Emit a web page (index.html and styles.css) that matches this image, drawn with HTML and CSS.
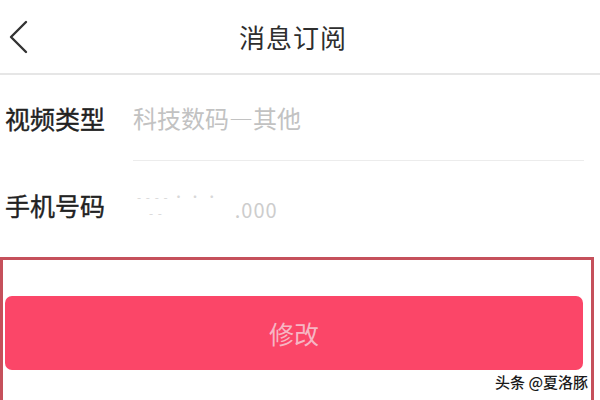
FILE: index.html
```html
<!DOCTYPE html>
<html lang="zh-CN">
<head>
<meta charset="utf-8">
<title>消息订阅</title>
<link rel="stylesheet" href="styles.css">
</head>
<body>
<div class="page">
  <header class="header">
    <svg class="back" width="24" height="36" viewBox="0 0 24 36">
      <path d="M19 4 L4 19 L19 34" fill="none" stroke="#333" stroke-width="2.4" stroke-linecap="round" stroke-linejoin="round"/>
    </svg>
    <h1 class="title">消息订阅</h1>
  </header>
  <section class="form">
    <div class="row row-type">
      <div class="label">视频类型</div>
      <div class="value value-line">科技数码—其他</div>
    </div>
    <div class="row row-phone">
      <div class="label">手机号码</div>
      <div class="value phone">
        <span class="blur">
          <span class="blur-top">- - - - · · ·</span>
          <span class="blur-bottom">- -</span>
        </span>
        <span class="tail">.000</span>
      </div>
    </div>
  </section>
  <section class="highlight">
    <button class="btn">修改</button>
  </section>
  <div class="watermark">头条 @夏洛豚</div>
</div>
</body>
</html>
```
FILE: styles.css
```css
html, body {
  margin: 0;
  padding: 0;
  background: #fff;
  overflow: hidden;
}
.page {
  position: relative;
  width: 600px;
  height: 400px;
  overflow: hidden;
  font-family: "Noto Sans CJK SC", "Noto Sans", sans-serif;
  color: #333;
}
.header {
  position: relative;
  height: 73px;
  border-bottom: 2px solid #e6e6e6;
  display: flex;
  align-items: center;
  justify-content: center;
}
.back {
  position: absolute;
  left: 7px;
  top: 18px;
}
.title {
  margin: 0 14px 0 0;
  font-size: 26px;
  font-weight: 400;
  color: #2e2e2e;
  letter-spacing: 1px;
}
.form {
  display: flex;
  flex-direction: column;
}
.row {
  display: flex;
  align-items: stretch;
}
.row-type { height: 86px; }
.row-phone { height: 88px; }
.label {
  width: 128px;
  padding-left: 5px;
  display: flex;
  align-items: center;
  font-size: 25px;
  font-weight: 400;
  color: #222;
  -webkit-text-stroke: 0.4px #222;
}
.value {
  flex: 1;
  display: flex;
  align-items: center;
  font-size: 24px;
  color: #c2c2c2;
}
.value-line {
  border-bottom: 1px solid #ececec;
  margin-right: 16px;
}
.phone {
  gap: 16px;
  padding-left: 4px;
}
.blur {
  display: flex;
  flex-direction: column;
  font-size: 12px;
  line-height: 16px;
  color: #d8d8d8;
  letter-spacing: 1px;
}
.blur-bottom {
  padding-left: 12px;
}
.tail {
  font-size: 20px;
  line-height: 22px;
  padding-top: 10px;
  color: #cdcdcd;
  letter-spacing: 1px;
}
.highlight {
  margin-top: 8px;
  width: 583px;
  height: 160px;
  border: 3px solid #c5505b;
  border-bottom: none;
  padding: 36px 3px 0 2px;
}
.btn {
  display: block;
  width: 578px;
  height: 74px;
  border: none;
  border-radius: 7px;
  background: #fb4668;
  color: #f6b6c4;
  font-family: "Noto Sans CJK SC", "Noto Sans", sans-serif;
  font-size: 25px;
  padding: 0;
}
.watermark {
  position: absolute;
  left: 495px;
  top: 371px;
  font-size: 15px;
  font-weight: 500;
  color: #1a1a1a;
  text-shadow: 0 0 2px #fff, 0 0 2px #fff;
  white-space: nowrap;
}
```
